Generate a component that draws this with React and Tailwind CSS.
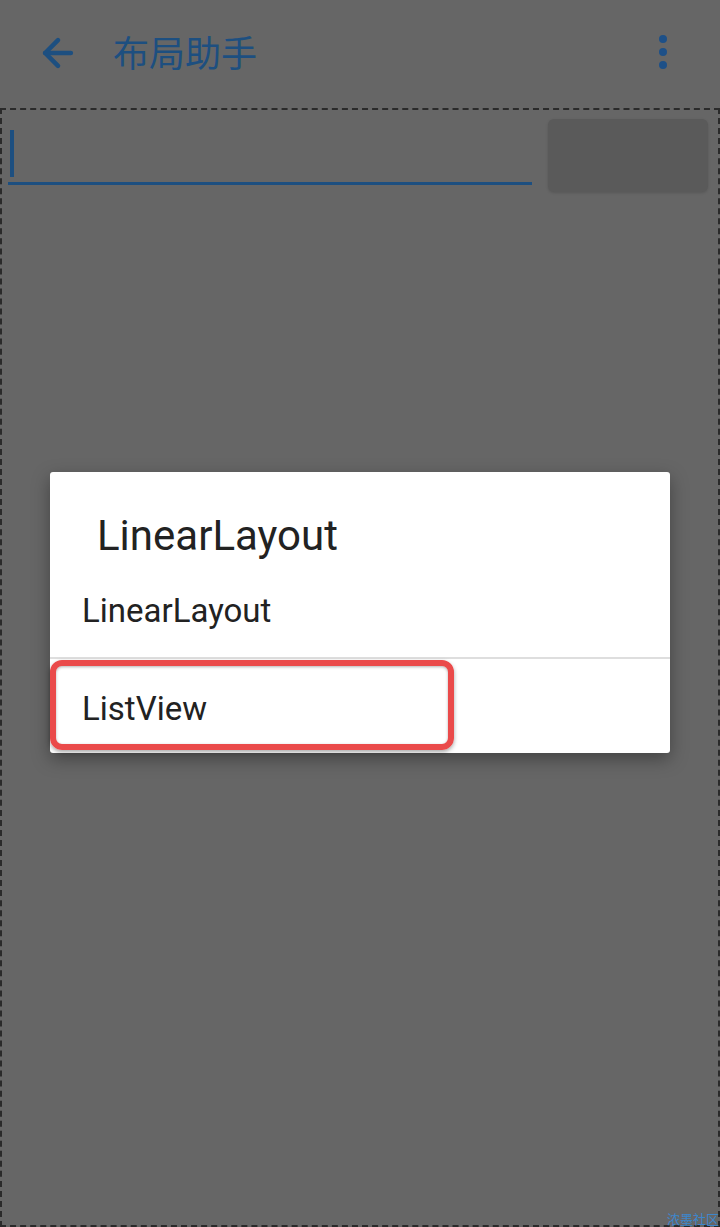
import { ArrowLeft } from 'lucide-react'

export default function App() {
  return (
    <div className="relative h-[1227px] w-[720px] overflow-hidden bg-[#666666] font-['Roboto','Noto_Sans_CJK_SC',sans-serif]">
      <header className="flex h-[108px] items-center pl-[36px] pr-[53px]">
        <ArrowLeft className="mb-[2px] h-[44px] w-[44px] text-[#1d4f80]" strokeWidth={2.5} />
        <h1 className="mb-[6px] ml-[33px] text-[36px] leading-none text-[#1d4f80] font-['Noto_Sans_CJK_SC',sans-serif]">布局助手</h1>
        <div className="mb-[4px] ml-auto flex flex-col items-center gap-[5px]">
          <span className="h-[8px] w-[8px] rounded-full bg-[#1d5088]" />
          <span className="h-[8px] w-[8px] rounded-full bg-[#1d5088]" />
          <span className="h-[8px] w-[8px] rounded-full bg-[#1d5088]" />
        </div>
      </header>

      <main className="h-[1119px] border-2 border-dashed border-[#2a2a2a]">
        <div className="flex items-start gap-[16px] pl-[6px] pr-[10px] pt-[9px]">
          <div className="relative h-[66px] flex-1 border-b-[3px] border-[#1d4f80]">
            <span className="absolute left-[2px] top-[11px] h-[47px] w-[4px] bg-[#1d4f80]" />
          </div>
          <div className="h-[73px] w-[160px] rounded-[6px] bg-[#5a5a5a] shadow-[0_1px_3px_rgba(0,0,0,0.15)]" />
        </div>
      </main>

      <div className="absolute inset-0 flex items-center justify-center">
        <div className="mt-[-2px] w-[620px] rounded-[3px] bg-white shadow-[0_6px_18px_rgba(0,0,0,0.35)]">
          <div className="h-[92px] pl-[47px] pt-[39px] text-[42px] leading-[50px] text-[#222]">LinearLayout</div>
          <div className="flex h-[95px] items-center border-b-[2px] border-[#dedede] pl-[32px] text-[33px] text-[#222]">LinearLayout</div>
          <div className="relative flex h-[94px] items-center pl-[32px] pt-[6px] text-[33px] text-[#222]">
            <span className="relative z-10">ListView</span>
            <div className="absolute left-0 top-[1px] h-[90px] w-[404px] rounded-[12px] border-[6px] border-[#ea4a4a] shadow-[0_2px_4px_rgba(0,0,0,0.35),inset_0_1px_3px_rgba(0,0,0,0.3)]" />
          </div>
        </div>
      </div>

      <span className="absolute bottom-0 right-[1px] text-[13px] leading-[16px] text-[#3d86cc] font-['Noto_Sans_CJK_SC',sans-serif]">浓墨社区</span>
    </div>
  )
}
